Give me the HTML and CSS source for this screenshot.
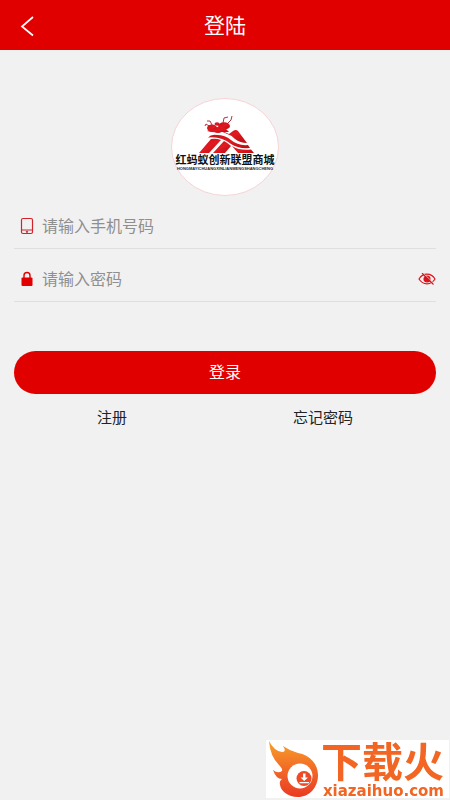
FILE: index.html
```html
<!DOCTYPE html>
<html lang="zh-CN">
<head>
    <meta charset="UTF-8">
    <meta name="viewport" content="width=device-width, initial-scale=1.0">
    <title>登陆</title>
    <link rel="stylesheet" href="styles.css">
</head>
<body>
    <header class="header">
        <button class="back-btn" type="button" aria-label="返回">
            <svg width="14" height="22" viewBox="0 0 14 22" fill="none" stroke="#fff" stroke-width="1.700">
                <path d="M13 2 L2 11.500 L13 20.500"/>
            </svg>
        </button>
        <h1>登陆</h1>
    </header>

    <main class="container">
        <svg class="logo" width="108" height="98" viewBox="0 0 108 98" role="img" aria-label="红蚂蚁创新联盟商城">
            <defs>
                <linearGradient id="ant-red" x1="0" y1="0" x2="1" y2="1">
                    <stop offset="0" stop-color="#c81018"/>
                    <stop offset="0.5" stop-color="#e01a20"/>
                    <stop offset="1" stop-color="#b80c12"/>
                </linearGradient>
            </defs>
            <ellipse cx="54" cy="49" rx="53.500" ry="48.500" fill="#fff" stroke="#f6d3d6"/>
            <g fill="url(#ant-red)">
                <!-- mountain with two road bands -->
                <path d="M28 55 L40 41 Q45 40 50 42 L38 55 Z"/>
                <path d="M42 55 L53 43 Q57 45 60 48 L54 55 Z"/>
                <path d="M37 39.500 Q40 36 46 37 Q54 37 60 42 Q67 48 77 47 L79 50 Q67 51 60 46 Q50 38 37 39.500 Z"/>
                <path d="M38 35.500 Q47 32 54 35 Q60 37 64 41 Q69 45 76 45 L67 33 Q65 31 62 33 L58 36 Q50 31 38 35.500 Z"/>
                <path d="M61 48 Q69 53 80 51.500 L83 55 L67 55 Z"/>
                <!-- ants -->
                <ellipse cx="41" cy="30" rx="5" ry="3.500"/>
                <ellipse cx="47" cy="32" rx="5" ry="3"/>
                <ellipse cx="53" cy="28" rx="6" ry="3.700"/>
                <path d="M36 33 Q42 35 48 34 L58 34 L54 30 L40 31 Z"/>
                <ellipse cx="46" cy="26" rx="2.500" ry="1.700"/>
            </g>
            <path d="M38 28 L35 26 L34 28 M41 27 L39 23 L36 23 M52 25 L53 20 L57 19 M56 26 L60 22 L61 18" fill="none" stroke="#a82028" stroke-width="0.900"/>
            <text class="logo-name" x="54" y="66" text-anchor="middle">红蚂蚁创新联盟商城</text>
            <text class="logo-sub" x="54" y="72" text-anchor="middle">HONGMAYICHUANGXINLIANMENGSHANGCHENG</text>
        </svg>

        <form class="login-form">
            <div class="field">
                <label for="phone" aria-label="手机号码">
                    <svg width="14" height="18" viewBox="0 0 14 18" fill="none" stroke="#d2232a">
                        <rect x="1.500" y="1.500" width="11" height="15" rx="1.500" stroke-width="1.200"/>
                        <path d="M2 13 H12"/>
                        <circle cx="7" cy="14.800" r="0.700" fill="#d2232a"/>
                    </svg>
                </label>
                <input type="tel" id="phone" placeholder="请输入手机号码">
            </div>
            <div class="field">
                <label for="password" aria-label="密码">
                    <svg width="14" height="18" viewBox="0 0 14 18">
                        <path d="M4 9 V5.500 Q4 2.500 7 2.500 Q10 2.500 10 5.500 V9" fill="none" stroke="#e10000" stroke-width="1.400"/>
                        <rect x="1.500" y="7.500" width="11" height="8.500" rx="1" fill="#e10000"/>
                    </svg>
                </label>
                <input type="password" id="password" placeholder="请输入密码">
                <button class="eye-btn" type="button" aria-label="显示密码">
                    <svg width="18" height="12" viewBox="0 0 18 12" fill="none" stroke="#d8141a" stroke-width="1.200">
                        <path d="M1 6 Q4 1.200 9 1.200 Q14 1.200 17 6 Q14 10.800 9 10.800 Q4 10.800 1 6 Z"/>
                        <circle cx="9" cy="6" r="3" fill="#d8141a"/>
                        <path d="M5 0 L16 10.500" stroke="#f1f1f1" stroke-width="0.800"/>
                        <path d="M4 0 L15.500 11.500" stroke-width="1.100"/>
                    </svg>
                </button>
            </div>
            <button class="login-btn" type="submit">登录</button>
        </form>

        <nav class="links">
            <a href="#">注册</a>
            <a href="#">忘记密码</a>
        </nav>
    </main>

    <div class="watermark">
        <svg width="54" height="58" viewBox="0 0 54 58">
            <defs>
                <linearGradient id="flame" x1="0" y1="0" x2="0" y2="1">
                    <stop offset="0" stop-color="#f7a02a"/>
                    <stop offset="0.500" stop-color="#f26a26"/>
                    <stop offset="1" stop-color="#ea3a24"/>
                </linearGradient>
            </defs>
            <path d="M2 1 Q7 11 15 12 Q20 12 16 6 Q23 11 31 13 C43 15 51 24 51 35 C51 48 42 57 31 57 C21 57 14 51 13 45 Q12 41 15 39 Q9 39 6 30 Q11 34 15 31 Q16 29 12 25 Q3 16 2 1 Z" fill="url(#flame)"/>
            <circle cx="33" cy="36" r="12.500" fill="#fff"/>
            <circle cx="37" cy="38.500" r="7.500" fill="#ee4a25"/>
            <path d="M36 33.500 H38.500 V37.500 H41 L37.200 41 L33.500 37.500 H36 Z M32.500 42 H42 V43.300 H32.500 Z" fill="#fff"/>
        </svg>
        <div class="watermark-text">
            <span class="watermark-name">下载火</span>
            <span class="watermark-url">xiazaihuo.com</span>
        </div>
    </div>
</body>
</html>
```

FILE: styles.css
```css
:root {
    --primary-color: #e10000;
    --background: #f1f1f1;
    --line-color: #dfdfdf;
    --text-color: #222222;
    --orange: #f26522;
}

* {
    box-sizing: border-box;
    margin: 0;
    padding: 0;
    font-family: "Noto Sans CJK SC", sans-serif;
}

body {
    min-height: 100vh;
    background-color: var(--background);
    color: var(--text-color);
}

button {
    border: none;
    background: none;
    cursor: pointer;
}

.header {
    display: grid;
    grid-template-columns: 54px 1fr 54px;
    align-items: center;
    height: 50px;
    background-color: var(--primary-color);
}

.header h1 {
    padding-bottom: 2px;
    color: #fff;
    font-size: 21px;
    font-weight: 400;
    line-height: 48px;
    text-align: center;
}

.back-btn {
    display: flex;
    justify-content: center;
    padding-top: 2px;
}

.container {
    padding: 48px 14px 0;
}

.logo {
    display: block;
    margin: 0 auto;
}

.logo-name {
    font-size: 11px;
    font-weight: 700;
    fill: #111;
}

.logo-sub {
    font-family: "Liberation Sans", sans-serif;
    font-size: 4px;
    font-weight: 700;
    fill: #222;
}

.field {
    display: flex;
    align-items: center;
    height: 46px;
    margin-top: 7px;
    padding-left: 6px;
    border-bottom: 1px solid var(--line-color);
}

.field label {
    display: flex;
    width: 22px;
}

.field input {
    flex: 1;
    min-width: 0;
    padding-bottom: 2px;
    border: none;
    outline: none;
    background: none;
    font-size: 16px;
    line-height: 24px;
}

.field input::placeholder {
    color: #8f8f8f;
}

.eye-btn {
    display: flex;
}

.login-btn {
    display: block;
    width: 100%;
    height: 43px;
    margin-top: 49px;
    padding-bottom: 3px;
    border-radius: 22px;
    background-color: var(--primary-color);
    color: #fff;
    font-size: 16px;
}

.links {
    display: flex;
    justify-content: space-around;
    margin-top: 11px;
}

.links a {
    color: var(--text-color);
    font-size: 15px;
    line-height: 24px;
    text-decoration: none;
}

.watermark {
    position: fixed;
    right: 1px;
    bottom: 2px;
    display: flex;
    padding: 0 5px 0 1px;
    background-color: #fff;
    color: var(--orange);
}

.watermark-text {
    display: flex;
    flex-direction: column;
    align-items: flex-end;
    gap: 6px;
}

.watermark-name {
    font-size: 41px;
    font-weight: 700;
    line-height: 38px;
}

.watermark-url {
    font-family: "DejaVu Sans", sans-serif;
    font-size: 15px;
    font-weight: 700;
    line-height: 14px;
}
```
